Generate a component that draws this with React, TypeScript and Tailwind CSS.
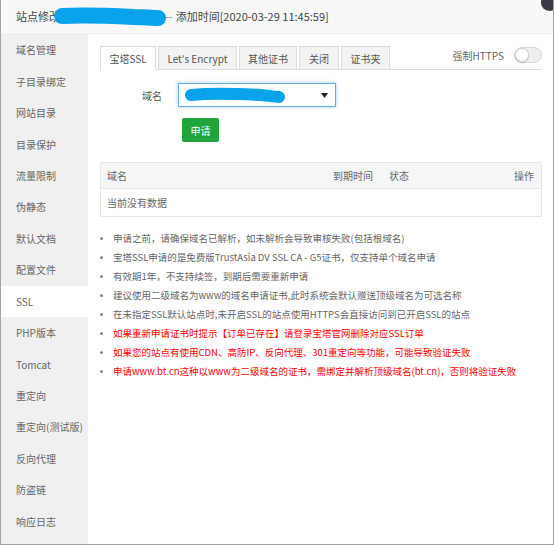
import React from 'react'

const MENU = [
  '域名管理', '子目录绑定', '网站目录', '目录保护', '流量限制', '伪静态', '默认文档', '配置文件',
  'SSL', 'PHP版本', 'Tomcat', '重定向', '重定向(测试版)', '反向代理', '防盗链', '响应日志',
]

const TABS = [
  { label: '宝塔SSL', w: 'w-[56px]', active: true },
  { label: "Let's Encrypt", w: 'w-[79px]' },
  { label: '其他证书', w: 'w-[58px]' },
  { label: '关闭', w: 'w-[40px]' },
  { label: '证书夹', w: 'w-[49px]' },
]

const TIPS: { text: string; red?: boolean }[] = [
  { text: '申请之前，请确保域名已解析，如未解析会导致审核失败(包括根域名)' },
  { text: '宝塔SSL申请的是免费版TrustAsia DV SSL CA - G5证书，仅支持单个域名申请' },
  { text: '有效期1年，不支持续签，到期后需要重新申请' },
  { text: '建议使用二级域名为www的域名申请证书,此时系统会默认赠送顶级域名为可选名称' },
  { text: '在未指定SSL默认站点时,未开启SSL的站点使用HTTPS会直接访问到已开启SSL的站点' },
  { text: '如果重新申请证书时提示【订单已存在】请登录宝塔官网删除对应SSL订单', red: true },
  { text: '如果您的站点有使用CDN、高防IP、反向代理、301重定向等功能，可能导致验证失败', red: true },
  { text: '申请www.bt.cn这种以www为二级域名的证书，需绑定并解析顶级域名(bt.cn)，否则将验证失败', red: true },
]

// blue marker strokes that hide the site name
function Scribble({ w, h, d }: { w: number; h: number; d: string }) {
  return (
    <svg width={w} height={h} viewBox={`0 0 ${w} ${h}`} className="block">
      <path d={d} fill="none" stroke="#08a3ea" strokeWidth={h - 5} strokeLinecap="round" strokeLinejoin="round" />
    </svg>
  )
}

export default function App() {
  return (
    <div className="relative w-[554px] h-[545px] overflow-hidden bg-white border-l border-r border-b border-[#a3a3a3] flex flex-col font-['Noto_Sans_CJK_SC','Noto_Sans',sans-serif]">
      {/* close button, mostly outside the frame */}
      <div className="absolute left-[540px] top-[-6px] w-[17px] h-[17px] rounded-full bg-[#3b3b45]" />

      {/* title */}
      <div className="h-[34px] shrink-0 bg-[#f8f8f8] border-b border-[#eeeeee] flex items-center pl-[15px] text-[11px] text-[#444]">
        <span>站点修改</span>
        <span className="-ml-[8px]">
          <Scribble w={116} h={21} d="M10 10 C30 9, 60 10, 82 11 C94 11, 102 12, 106 12" />
        </span>
        <span className="-ml-[3px] text-[#888]">--</span>
        <span className="ml-[3px]">添加时间[2020-03-29 11:45:59]</span>
      </div>

      <div className="flex flex-1 min-h-0">
        {/* side menu */}
        <div className="w-[87px] shrink-0 bg-[#f0f0f0]">
          {MENU.map(m => (
            <div
              key={m}
              className={`h-[31.45px] flex items-center pl-[15px] text-[10px] text-[#666] ${m === 'SSL' ? 'bg-white' : ''}`}
            >
              {m}
            </div>
          ))}
        </div>

        {/* content */}
        <div className="flex-1 pl-[12px] pr-[11px] pt-[11px]">
          {/* tabs */}
          <div className="flex items-end gap-[2px] border-b border-[#ddd]">
            {TABS.map(t => (
              <div
                key={t.label}
                className={`${t.w} h-[24px] -mb-px flex items-center justify-center text-[10px] text-[#555] border border-[#ddd] ${
                  t.active ? 'bg-white border-b-white' : 'bg-[#f3f3f3] border-b-[#ddd]'
                }`}
              >
                {t.label}
              </div>
            ))}
            <div className="ml-auto self-start mt-[2px] mb-[6px] flex items-center gap-[10px]">
              <span className="text-[10px] text-[#666]">强制HTTPS</span>
              <div className="w-[28px] h-[16px] rounded-full bg-[#eeeeee] border border-[#d6d6d6] relative">
                <div className="absolute left-0 top-0 w-[14px] h-[14px] rounded-full bg-white border border-[#d0d0d0] shadow-[0_1px_1px_rgba(0,0,0,0.15)]" />
              </div>
            </div>
          </div>

          {/* domain select */}
          <div className="flex items-center mt-[13px]">
            <span className="w-[62px] text-right text-[10px] text-[#555]">域名</span>
            <div className="ml-[16px] w-[158px] h-[24px] border border-[#66afe9] shadow-[0_0_4px_rgba(102,175,233,0.6)] bg-white flex items-center pl-[3px] pr-[7px]">
              <Scribble w={106} h={17} d="M9 8 C30 6, 60 7, 80 8 C88 9, 94 10, 97 10" />
              <svg width="7" height="5" viewBox="0 0 7 5" className="ml-auto">
                <path d="M0 0 H7 L3.5 5 Z" fill="#222" />
              </svg>
            </div>
          </div>

          <button className="mt-[11px] ml-[82px] w-[37px] h-[24px] rounded-[2px] bg-[#20a53a] text-white text-[10px] flex items-center justify-center">
            申请
          </button>

          {/* table */}
          <div className="mt-[20px] border border-[#e6e6e6] text-[10px] text-[#666]">
            <div className="h-[26px] bg-[#f6f6f6] border-b border-[#e6e6e6] grid grid-cols-[226px_56px_1fr_auto] items-center pl-[6px] pr-[7px]">
              <span>域名</span>
              <span>到期时间</span>
              <span>状态</span>
              <span>操作</span>
            </div>
            <div className="h-[27px] flex items-center pl-[6px]">当前没有数据</div>
          </div>

          {/* tips */}
          <ul className="mt-[12px]">
            {TIPS.map(t => (
              <li key={t.text} className={`h-[19px] flex items-center text-[9.5px] whitespace-nowrap ${t.red ? 'text-[#ff0000]' : 'text-[#666]'}`}>
                <span className="w-[3px] h-[3px] rounded-full bg-[#888] mr-[10px] shrink-0" />
                {t.text}
              </li>
            ))}
          </ul>
        </div>
      </div>
    </div>
  )
}
